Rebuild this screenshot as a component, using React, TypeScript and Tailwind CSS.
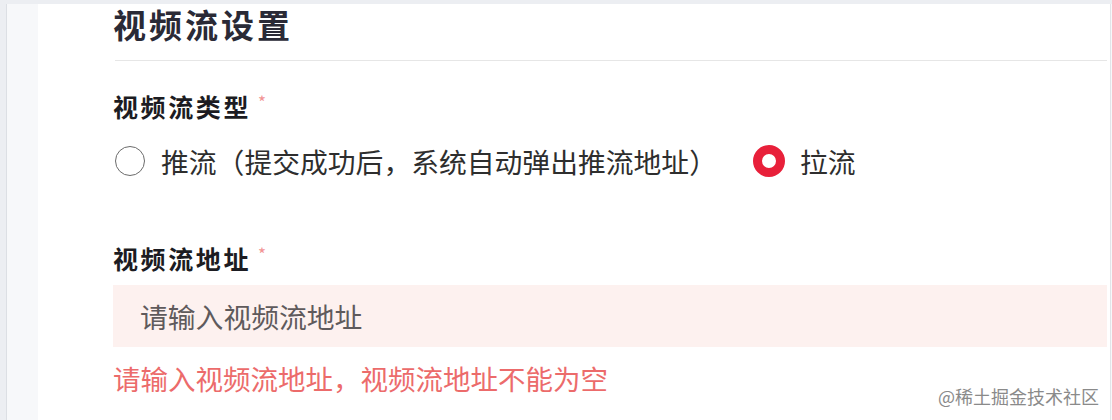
import React from "react";

const font = { fontFamily: '"Noto Sans CJK SC", "Noto Sans", sans-serif' };

function Label({ text }: { text: string }) {
  return (
    <div className="flex h-[32px] items-center">
      <span className="text-[25px] font-bold leading-[32px] tracking-[2.6px] text-[#1c1c22]">{text}</span>
      <span className="ml-[7px] -mt-[10px] text-[17px] leading-none text-[#f29494]">*</span>
    </div>
  );
}

export default function App() {
  return (
    <div style={font} className="w-[1112px] h-[420px] overflow-hidden bg-[#eceef2] pt-[4px] pl-[6px]">
      <div className="relative flex h-full border-l border-[#dcdfe4] bg-[#f7f8fa]">
        <div className="w-[31px] shrink-0" />
        <div className="flex-1 bg-white border-r border-[#e2e4e8] mr-[1px] pl-[75px] pr-[3px]">
          <div className="h-[57px] border-b border-[#e6e6e6] ml-[2px]">
            <div className="-ml-[2px] text-[33px] font-bold leading-[40px] tracking-[3px] text-[#2a2a36]">视频流设置</div>
          </div>
          <div className="mt-[29px]">
            <Label text="视频流类型" />
          </div>
          <div className="mt-[19px] flex h-[40px] items-center">
            <div className="ml-[2px] h-[30px] w-[30px] rounded-full border-[1.5px] border-[#6b6b6b] bg-white" />
            <span className="ml-[16px] text-[27.8px] leading-[40px] text-[#2e2e2e]">推流（提交成功后，系统自动弹出推流地址）</span>
            <div className="ml-[36px] h-[32px] w-[32px] rounded-full border-[9px] border-[#e8203a] bg-white" />
            <span className="ml-[15px] text-[27.8px] leading-[40px] text-[#2e2e2e]">拉流</span>
          </div>
          <div className="mt-[61px]">
            <Label text="视频流地址" />
          </div>
          <div className="mt-[11px] flex h-[62px] items-center bg-[#fdf1ef] pl-[27px]">
            <span className="text-[27.8px] leading-[40px] text-[#5f5a5c]">请输入视频流地址</span>
          </div>
          <div className="mt-[15px] h-[32px] text-[27.5px] leading-[32px] text-[#ec6b6b]">
            请输入视频流地址，视频流地址不能为空
          </div>
        </div>
        <div className="absolute right-[13px] bottom-[12px] text-[18px] leading-[24px] text-[#8a8a8a]">@稀土掘金技术社区</div>
      </div>
    </div>
  );
}
